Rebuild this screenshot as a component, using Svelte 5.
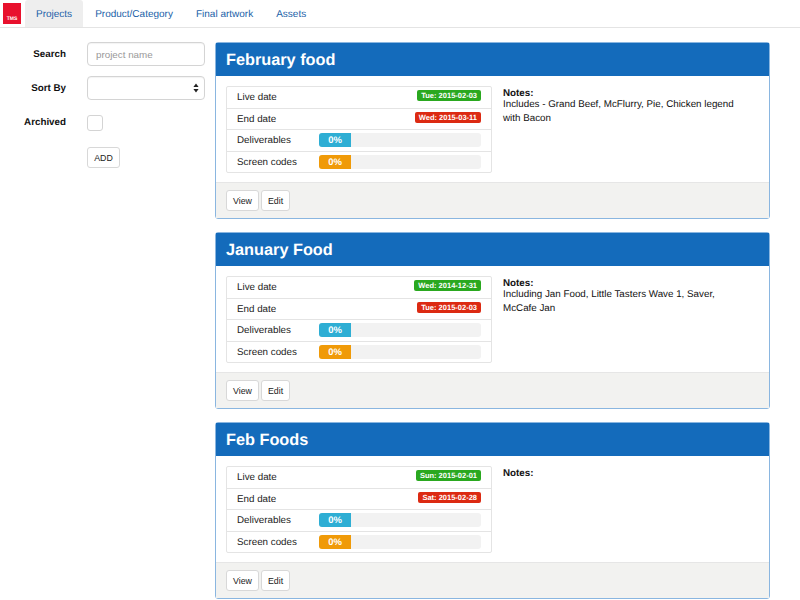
<script>
  const tabs = ['Projects', 'Product/Category', 'Final artwork', 'Assets'];

  const projects = [
    {
      title: 'February food',
      live: 'Tue: 2015-02-03',
      end: 'Wed: 2015-03-11',
      notes: 'Includes - Grand Beef, McFlurry, Pie, Chicken legend with Bacon',
    },
    {
      title: 'January Food',
      live: 'Wed: 2014-12-31',
      end: 'Tue: 2015-02-03',
      notes: 'Including Jan Food, Little Tasters Wave 1, Saver, McCafe Jan',
    },
    {
      title: 'Feb Foods',
      live: 'Sun: 2015-02-01',
      end: 'Sat: 2015-02-28',
      notes: '',
    },
  ];
</script>

<nav class="nav">
  <div class="logo"><span>TMS</span></div>
  <ul class="tabs">
    {#each tabs as tab, i}
      <li class="tab" class:active={i === 0}>{tab}</li>
    {/each}
  </ul>
</nav>

<div class="page">
  <form class="filters">
    <div class="field">
      <span class="label">Search</span>
      <input class="control" type="text" placeholder="project name" />
    </div>
    <div class="field">
      <span class="label">Sort By</span>
      <div class="control select">
        <svg width="6" height="10" viewBox="0 0 6 10">
          <path d="M3 0.5 L5.6 4 H0.4 Z M3 9.5 L5.6 6 H0.4 Z" fill="#222" />
        </svg>
      </div>
    </div>
    <div class="field check-field">
      <span class="label">Archived</span>
      <span class="checkbox"></span>
    </div>
    <div class="field add-field">
      <span class="label"></span>
      <button class="btn add" type="button">ADD</button>
    </div>
  </form>

  <main class="panels">
    {#each projects as p}
      <section class="panel">
        <h2 class="panel-title">{p.title}</h2>
        <div class="panel-body">
          <ul class="list">
            <li class="row">
              <span class="row-name">Live date</span>
              <span class="badge green">{p.live}</span>
            </li>
            <li class="row">
              <span class="row-name">End date</span>
              <span class="badge red">{p.end}</span>
            </li>
            <li class="row">
              <span class="row-name">Deliverables</span>
              <span class="progress"><span class="bar blue">0%</span></span>
            </li>
            <li class="row">
              <span class="row-name">Screen codes</span>
              <span class="progress"><span class="bar orange">0%</span></span>
            </li>
          </ul>
          <div class="notes">
            <strong>Notes:</strong>
            {#if p.notes}<p>{p.notes}</p>{/if}
          </div>
        </div>
        <div class="panel-footer">
          <button class="btn" type="button">View</button>
          <button class="btn" type="button">Edit</button>
        </div>
      </section>
    {/each}
  </main>
</div>

<style>
  :global(body) {
    font-family: 'Liberation Sans', Arial, sans-serif;
    font-size: 9.8px;
    color: #222;
    background: #fff;
    overflow: hidden;
    text-rendering: geometricPrecision;
  }

  .nav {
    display: flex;
    height: 28px;
    box-sizing: border-box;
    border-bottom: 1px solid #e4e4e4;
  }

  .logo {
    width: 18px;
    height: 21px;
    margin: 3px 4px 0 3px;
    background: #e8112d;
    color: #fff;
    font-size: 5px;
    font-weight: bold;
    display: flex;
    align-items: flex-end;
    justify-content: center;
    padding-bottom: 2px;
    box-sizing: border-box;
  }

  .tabs {
    display: flex;
    list-style: none;
    margin: 0;
    padding: 0;
  }

  .tab {
    padding: 8px 11px 0;
    margin-right: 1px;
    color: #1a5fa8;
    font-size: 10px;
    line-height: 13px;
  }

  .tab.active {
    background: #eeeeee;
    border-radius: 3px 3px 0 0;
  }

  .page {
    display: flex;
    padding-top: 14px;
  }

  .filters {
    width: 205px;
    flex-shrink: 0;
  }

  .field {
    display: flex;
    align-items: center;
    margin-bottom: 10px;
    height: 24px;
  }

  .label {
    width: 66px;
    margin-right: 21px;
    padding-top: 1px;
    text-align: right;
    font-weight: bold;
    color: #111;
  }

  .control {
    width: 118px;
    height: 24px;
    box-sizing: border-box;
    border: 1px solid #d4d4d4;
    border-radius: 4px;
    padding: 0 8px;
    font: inherit;
    background: #fff;
    box-shadow: inset 0 1px 1px rgba(0, 0, 0, 0.05);
  }

  .control::placeholder {
    color: #999;
  }

  .select {
    display: flex;
    align-items: center;
    justify-content: flex-end;
    padding-right: 5px;
  }

  .checkbox {
    width: 16px;
    height: 16px;
    box-sizing: border-box;
    border: 1px solid #d4d4d4;
    border-radius: 3px;
    margin-top: 2px;
  }

  .btn {
    height: 21px;
    box-sizing: border-box;
    padding: 1px 6px 0;
    border: 1px solid #d8d8d8;
    border-radius: 3px;
    background: #fff;
    font-family: inherit;
    font-size: 8.8px;
    color: #222;
  }

  .add {
    width: 33px;
    padding: 0;
    margin-top: 3px;
  }

  .panels {
    width: 555px;
    flex-shrink: 0;
    margin-left: 10px;
  }

  .panel {
    height: 177px;
    box-sizing: border-box;
    margin-bottom: 13px;
    border: 1px solid #8ab6e0;
    border-radius: 3px;
    background: #fff;
    display: flex;
    flex-direction: column;
  }

  .panel-title {
    margin: 0;
    height: 33px;
    background: #146bbb;
    color: #fff;
    font-size: 16.3px;
    font-weight: bold;
    line-height: 34px;
    padding-left: 10px;
    flex-shrink: 0;
  }

  .panel-body {
    flex: 1;
    display: flex;
    padding: 10px 10px 0;
  }

  .list {
    list-style: none;
    margin: 0;
    padding: 0;
    width: 266px;
    height: 87px;
    box-sizing: border-box;
    border: 1px solid #e4e4e4;
    border-radius: 2px;
    flex-shrink: 0;
    display: flex;
    flex-direction: column;
  }

  .row {
    flex: 1;
    box-sizing: border-box;
    border-bottom: 1px solid #e4e4e4;
    display: flex;
    align-items: center;
    justify-content: space-between;
    padding: 0 10px;
    color: #222;
  }

  .row:last-child {
    border-bottom: none;
  }

  .row-name {
    width: 82px;
    padding-top: 1px;
    flex-shrink: 0;
  }

  .badge {
    height: 11px;
    line-height: 11px;
    padding: 0 4px;
    border-radius: 2px;
    color: #fff;
    font-size: 7.5px;
    font-weight: bold;
    margin-bottom: 3px;
  }

  .green {
    background: #2aa81f;
  }

  .red {
    background: #dc2a12;
  }

  .progress {
    flex: 1;
    height: 14px;
    background: #f2f2f2;
    border-radius: 3px;
    overflow: hidden;
    display: flex;
  }

  .bar {
    width: 32px;
    color: #fff;
    font-size: 9.5px;
    font-weight: bold;
    text-align: center;
    line-height: 15px;
  }

  .blue {
    background: #2eaed4;
  }

  .orange {
    background: #f09a08;
  }

  .notes {
    margin-left: 11px;
    padding-top: 2.5px;
    line-height: 14px;
    color: #111;
    width: 240px;
  }

  .notes strong {
    display: block;
    line-height: 9px;
  }

  .notes p {
    margin: 0;
  }

  .panel-footer {
    height: 36px;
    box-sizing: border-box;
    flex-shrink: 0;
    background: #f2f2f0;
    border-top: 1px solid #e6e6e6;
    padding: 7px 10px 0;
    display: flex;
    gap: 2px;
  }
</style>
